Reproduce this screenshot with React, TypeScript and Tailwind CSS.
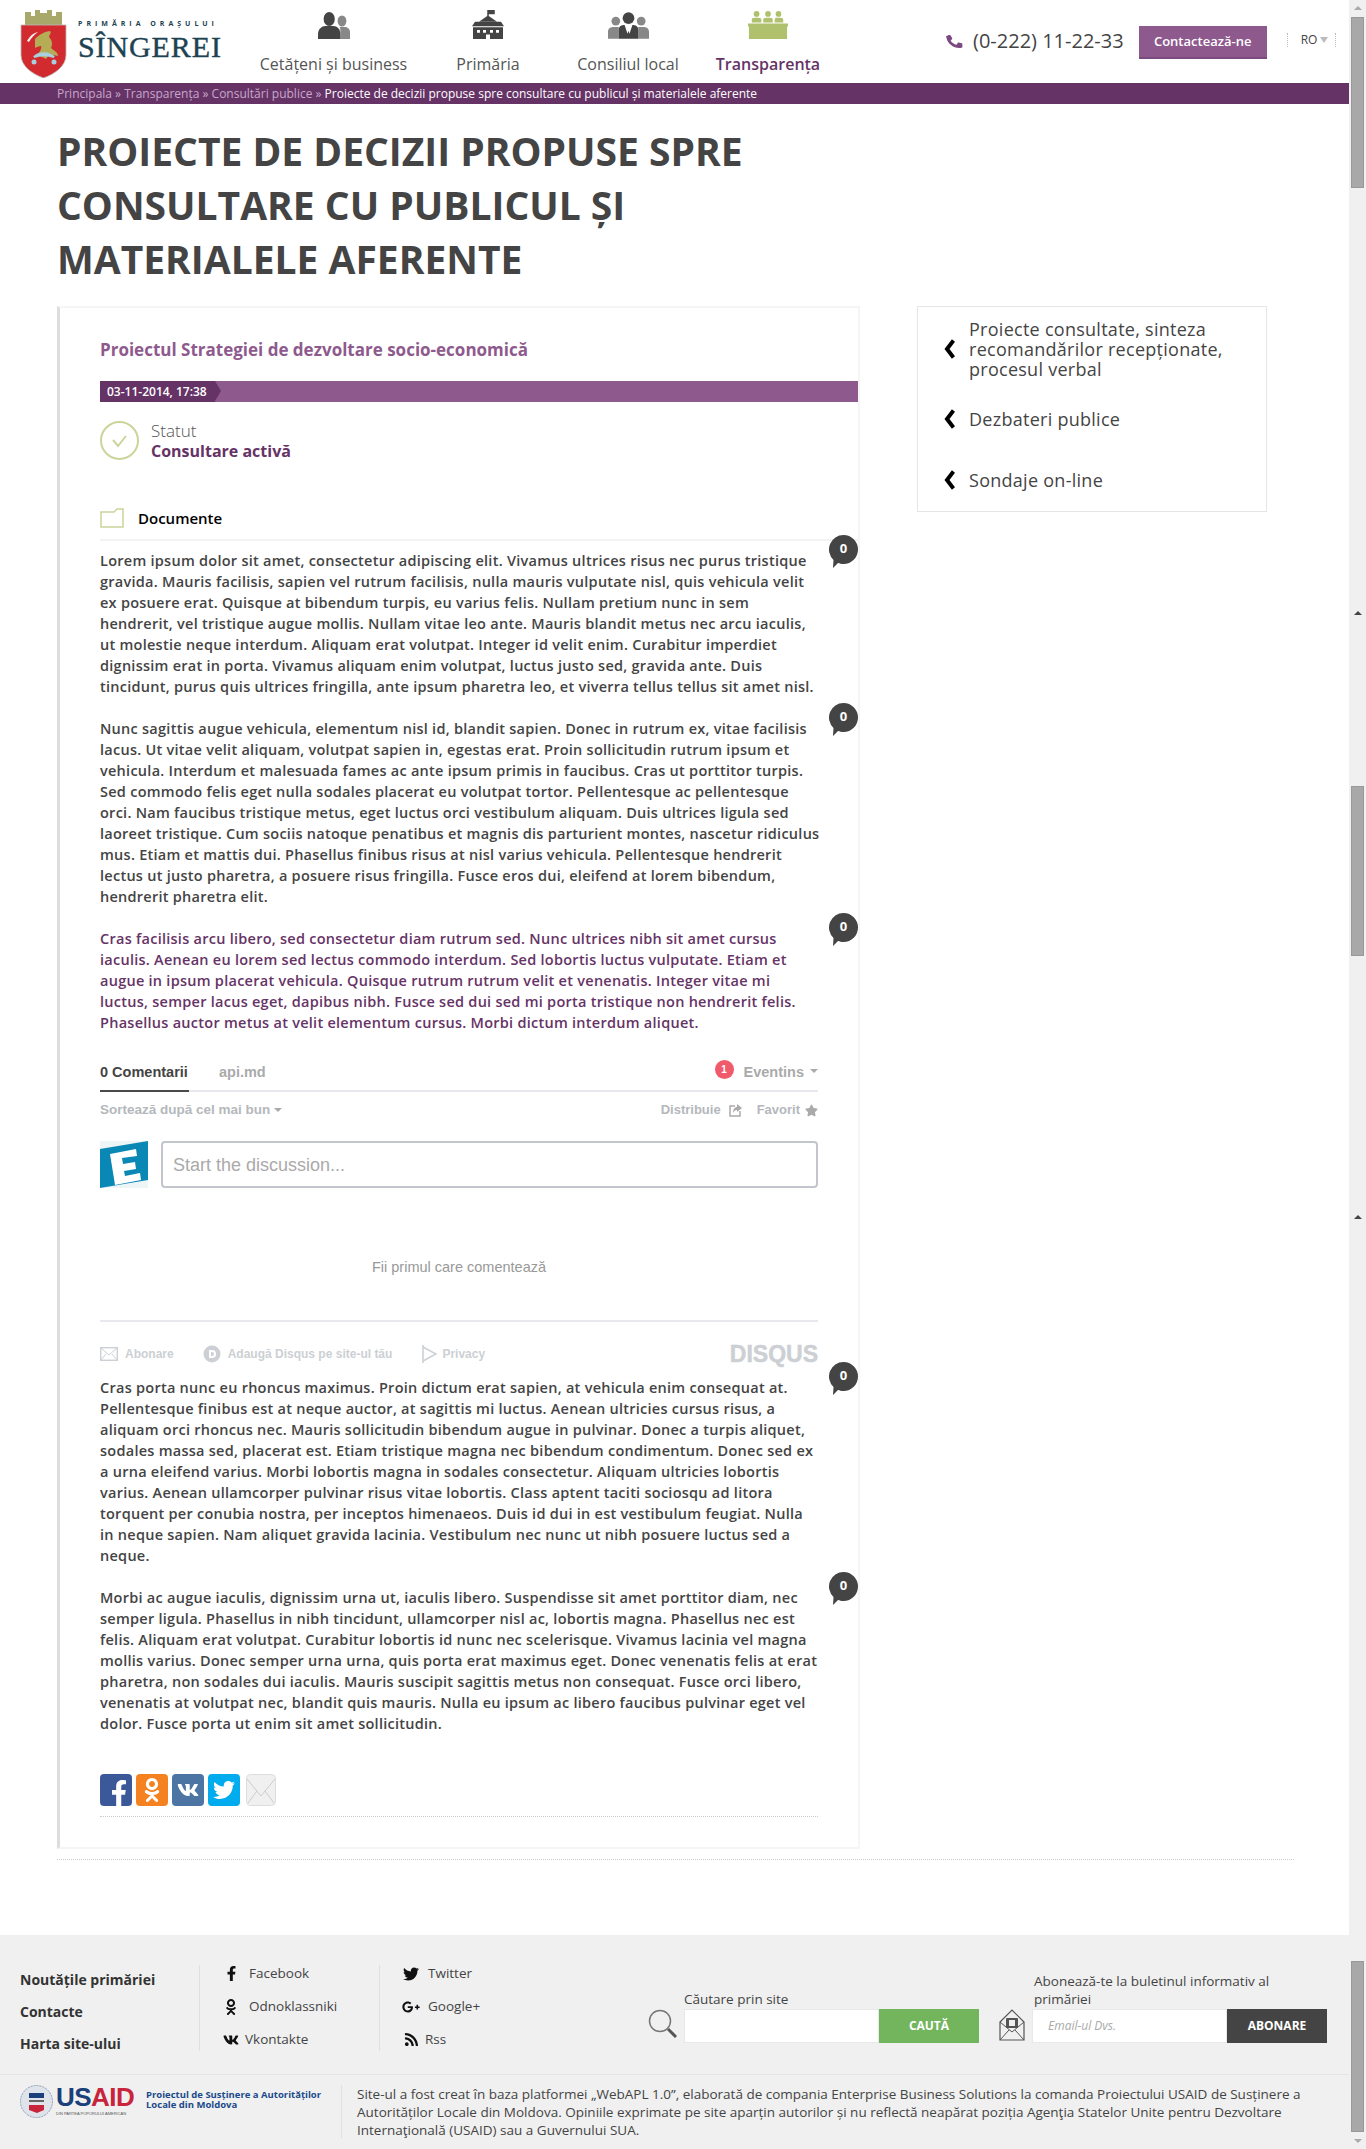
import { FaFacebookF, FaOdnoklassniki, FaVk, FaTwitter, FaGooglePlusG, FaRss, FaStar, FaPhone } from "react-icons/fa"

const paragraphs1 = [
    [
        "Lorem ipsum dolor sit amet, consectetur adipiscing elit. Vivamus ultrices risus nec purus tristique",
        "gravida. Mauris facilisis, sapien vel rutrum facilisis, nulla mauris vulputate nisl, quis vehicula velit",
        "ex posuere erat. Quisque at bibendum turpis, eu varius felis. Nullam pretium nunc in sem",
        "hendrerit, vel tristique augue mollis. Nullam vitae leo ante. Mauris blandit metus nec arcu iaculis,",
        "ut molestie neque interdum. Aliquam erat volutpat. Integer id velit enim. Curabitur imperdiet",
        "dignissim erat in porta. Vivamus aliquam enim volutpat, luctus justo sed, gravida ante. Duis",
        "tincidunt, purus quis ultrices fringilla, ante ipsum pharetra leo, et viverra tellus tellus sit amet nisl.",
    ],
    [
        "Nunc sagittis augue vehicula, elementum nisl id, blandit sapien. Donec in rutrum ex, vitae facilisis",
        "lacus. Ut vitae velit aliquam, volutpat sapien in, egestas erat. Proin sollicitudin rutrum ipsum et",
        "vehicula. Interdum et malesuada fames ac ante ipsum primis in faucibus. Cras ut porttitor turpis.",
        "Sed commodo felis eget nulla sodales placerat eu volutpat tortor. Pellentesque ac pellentesque",
        "orci. Nam faucibus tristique metus, eget luctus orci vestibulum aliquam. Duis ultrices ligula sed",
        "laoreet tristique. Cum sociis natoque penatibus et magnis dis parturient montes, nascetur ridiculus",
        "mus. Etiam et mattis dui. Phasellus finibus risus at nisl varius vehicula. Pellentesque hendrerit",
        "lectus ut justo pharetra, a posuere risus fringilla. Fusce eros dui, eleifend at lorem bibendum,",
        "hendrerit pharetra elit.",
    ],
]

const paragraph3 = [
    "Cras facilisis arcu libero, sed consectetur diam rutrum sed. Nunc ultrices nibh sit amet cursus",
    "iaculis. Aenean eu lorem sed lectus commodo interdum. Sed lobortis luctus vulputate. Etiam et",
    "augue in ipsum placerat vehicula. Quisque rutrum rutrum velit et venenatis. Integer vitae mi",
    "luctus, semper lacus eget, dapibus nibh. Fusce sed dui sed mi porta tristique non hendrerit felis.",
    "Phasellus auctor metus at velit elementum cursus. Morbi dictum interdum aliquet.",
]

const paragraphs2 = [
    [
        "Cras porta nunc eu rhoncus maximus. Proin dictum erat sapien, at vehicula enim consequat at.",
        "Pellentesque finibus est at neque auctor, at sagittis mi luctus. Aenean ultricies cursus risus, a",
        "aliquam orci rhoncus nec. Mauris sollicitudin bibendum augue in pulvinar. Donec a turpis aliquet,",
        "sodales massa sed, placerat est. Etiam tristique magna nec bibendum condimentum. Donec sed ex",
        "a urna eleifend varius. Morbi lobortis magna in sodales consectetur. Aliquam ultricies lobortis",
        "varius. Aenean ullamcorper pulvinar risus vitae lobortis. Class aptent taciti sociosqu ad litora",
        "torquent per conubia nostra, per inceptos himenaeos. Duis id dui in est vestibulum feugiat. Nulla",
        "in neque sapien. Nam aliquet gravida lacinia. Vestibulum nec nunc ut nibh posuere luctus sed a",
        "neque.",
    ],
    [
        "Morbi ac augue iaculis, dignissim urna ut, iaculis libero. Suspendisse sit amet porttitor diam, nec",
        "semper ligula. Phasellus in nibh tincidunt, ullamcorper nisl ac, lobortis magna. Phasellus nec est",
        "felis. Aliquam erat volutpat. Curabitur lobortis id nunc nec scelerisque. Vivamus lacinia vel magna",
        "mollis varius. Donec semper urna urna, quis porta erat maximus eget. Donec venenatis felis at erat",
        "pharetra, non sodales dui iaculis. Mauris suscipit sagittis metus non consequat. Fusce orci libero,",
        "venenatis at volutpat nec, blandit quis mauris. Nulla eu ipsum ac libero faucibus pulvinar eget vel",
        "dolor. Fusce porta ut enim sit amet sollicitudin.",
    ],
]

const Bubble = () => (
    <div className="absolute right-[-40px] top-[-15px] w-[29px] h-[33px]">
        <svg width="29" height="33" viewBox="0 0 29 33" className="absolute inset-0">
            <path d="M14.5 0a14.5 14.5 0 0 1 0 29c-2 0-4 -.5-5.500-1L4 33l.5-8A14.500 14.500 0 0 1 14.500 0z" fill="#444" />
        </svg>
        <span className="absolute inset-x-0 top-[5px] text-center text-[13px] leading-[16px] font-bold text-white">0</span>
    </div>
)

const Paragraph = ({ lines, purple }: { lines: string[]; purple?: boolean }) => (
    <div className="relative w-[718px]">
        <p className={`text-[14.500px] leading-[21px] font-semibold tracking-[0.018em] whitespace-nowrap ${purple ? "text-[#663366]" : "text-[#444]"}`}>
            {lines.map((line) => (
                <span key={line} className="block">{line}</span>
            ))}
        </p>
        <Bubble />
    </div>
)

const PeopleIcon = () => (
    <svg width="32" height="27" viewBox="0 0 40 27" preserveAspectRatio="none">
        <circle cx="30" cy="9" r="5.500" fill="#888" />
        <path d="M28 27v-6c0-3 0-5-1-6h6c4 0 7 2 7 5v7z" fill="#888" />
        <circle cx="14" cy="7" r="7" fill="#444" />
        <path d="M0 27v-5c0-5 5-8 9-8h10c5 0 9 3 9 8v5z" fill="#444" />
    </svg>
)

const SchoolIcon = () => (
    <svg width="32" height="29" viewBox="0 0 32 32" preserveAspectRatio="none">
        <path d="M16 0v7M16 0h6v4h-6" stroke="#444" strokeWidth="1.500" fill="#444" />
        <path d="M16 6l9 7H7z" fill="#444" />
        <path d="M3 13h26l3 5H0z" fill="#444" />
        <path fillRule="evenodd" d="M1 19h30v13H1zM5 22v3h3v-3zM11 22v3h3v-3zM18 22v3h3v-3zM24 22v3h3v-3zM14 27v5h4v-5z" fill="#444" />
    </svg>
)

const CouncilIcon = () => (
    <svg width="41" height="27" viewBox="0 0 42 27">
        <circle cx="8" cy="9" r="4.500" fill="#888" />
        <circle cx="34" cy="9" r="4.500" fill="#888" />
        <path d="M0 27v-7c0-4 3-5 6-5h5v12zM42 27v-7c0-4-3-5-6-5h-5v12z" fill="#888" />
        <circle cx="21" cy="6" r="6" fill="#444" />
        <path d="M11 27v-9c0-4 3-5 6-5l3 9 1-3 1 3 3-9c3 0 6 1 6 5v9z" fill="#444" />
    </svg>
)

const BoardIcon = () => (
    <svg width="40" height="28" viewBox="0 0 42 29" preserveAspectRatio="none">
        <circle cx="9" cy="3" r="3" fill="#afc16d" />
        <circle cx="21" cy="3" r="3" fill="#afc16d" />
        <circle cx="32" cy="3" r="3" fill="#afc16d" />
        <path d="M4 12V9q0-2 3-2h4q3 0 3 2v3zM16 12V9q0-2 3-2h4q3 0 3 2v3zM28 12V9q0-2 2-2h4q3 0 3 2v3z" fill="#afc16d" />
        <path d="M0 13h42v3h-1v13H1V16H0z" fill="#afc16d" />
    </svg>
)

const Crest = () => (
    <svg width="47" height="70" viewBox="0 0 47 70">
        <path d="M5 4h6v4h4V2h5v3h7V2h5v6h4V4h6v13l-3 4H8l-3-4z" fill="#a9a86b" />
        <path d="M1 17h45v30c0 11-11 19-22.500 23C12 66 1 58 1 47z" fill="#d22b2f" stroke="#b9b9b9" strokeWidth="0.800" />
        <path d="M15 31c4-4 8-7 15-8 2 2-1 4-1 6 3 3 4 7 2 11 3 3 7 4 7 8-3-1-6-1-8-3l-4 6c-3-2-6-2-8-5 2-3 4-5 3-8-2 0-4 1-6 2z" fill="#b5ad55" />
        <path d="M14 49c5-5 15-5 20 0-6-2-14-2-20 0z" fill="#a8d0de" stroke="#a8d0de" strokeWidth="2" />
        <circle cx="14" cy="54" r="2.500" fill="#a8d0de" />
        <circle cx="34" cy="54" r="2.500" fill="#a8d0de" />
        <path d="M7 33c3-5 6-8 11-9-4 3-7 6-9 10z" fill="#f0f0f0" />
    </svg>
)

const ShareIcon = ({ bg, children }: { bg: string; children: React.ReactNode }) => (
    <div className={`w-[32px] h-[32px] rounded-[4px] flex items-center justify-center overflow-hidden text-white ${bg}`}>{children}</div>
)

const FooterSocial = ({ icon, label, textClass }: { icon: React.ReactNode; label: string; textClass: string }) => (
    <div className="flex items-center h-[33px]">
        <span className="w-[24px] flex justify-center text-[#111]">{icon}</span>
        <span className={`text-[13.500px] text-[#444] ${textClass}`}>{label}</span>
    </div>
)

const SidebarItem = ({ children, className }: { children: React.ReactNode; className: string }) => (
    <div className={`flex items-center ${className}`}>
        <svg width="11" height="20" viewBox="0 0 11 20" className="shrink-0 ml-[26px]">
            <path d="M9.500 1.500L3 10l6.500 8.500" fill="none" stroke="#000" strokeWidth="4" />
        </svg>
        <span className="ml-[14px] text-[18px] leading-[20px] font-medium tracking-[0.015em] text-[#444]">{children}</span>
    </div>
)

export default function App() {
    return (
        <div className="relative w-[1366px] h-[2149px] overflow-hidden bg-white font-['Open_Sans',sans-serif] text-[#444]">
            <div className="w-[1349px]">
                {/* header */}
                <header className="flex h-[83px]">
                    <div className="w-[246px] pl-[20px] pt-[8px] flex">
                        <Crest />
                        <div className="ml-[11px] pt-[11px]">
                            <div className="text-[7px] leading-[9px] font-bold tracking-[0.57em] text-[#1d4352] whitespace-nowrap">PRIMĂRIA ORAȘULUI</div>
                            <div className="mt-[4px] text-[30px] leading-[30px] font-['Liberation_Serif',serif] text-[#1d4352] whitespace-nowrap tracking-[0.03em] [-webkit-text-stroke:0.4px_#1d4352]">SÎNGEREI</div>
                        </div>
                    </div>
                    <nav className="flex">
                        <div className="w-[172px] pl-[3px] flex flex-col items-center">
                            <div className="h-[29px] mt-[10px] flex items-end"><PeopleIcon /></div>
                            <div className="mt-[14px] text-[16px] leading-[22px] text-[#555]">Cetățeni și business</div>
                        </div>
                        <div className="w-[140px] flex flex-col items-center">
                            <div className="h-[29px] mt-[10px] flex items-end"><SchoolIcon /></div>
                            <div className="mt-[14px] text-[16px] leading-[22px] text-[#555]">Primăria</div>
                        </div>
                        <div className="w-[140px] flex flex-col items-center">
                            <div className="h-[29px] mt-[10px] flex items-end"><CouncilIcon /></div>
                            <div className="mt-[14px] text-[16px] leading-[22px] text-[#555]">Consiliul local</div>
                        </div>
                        <div className="w-[140px] flex flex-col items-center">
                            <div className="h-[29px] mt-[10px] flex items-end"><BoardIcon /></div>
                            <div className="mt-[14px] text-[16px] leading-[22px] font-semibold text-[#663366]">Transparența</div>
                        </div>
                    </nav>
                    <div className="flex items-start pt-[26px] ml-[109px]">
                        <FaPhone className="text-[#7a4a80] text-[15px] mt-[8px] scale-x-[-1] rotate-[-10deg]" />
                        <span className="ml-[11px] text-[20px] leading-[30px] text-[#444] whitespace-nowrap">(0-222) 11-22-33</span>
                        <button className="ml-[15px] w-[128px] h-[33px] bg-[#8e5a8e] border-b-2 border-[#7a4a80] text-white text-[13px] font-semibold">Contactează-ne</button>
                        <div className="ml-[20px] mt-[7px] h-[14px] border-l border-dotted border-[#bbb]" />
                        <span className="ml-[13px] mt-[6px] text-[12px] leading-[16px] text-[#444]">RO</span>
                        <span className="ml-[3px] mt-[11px] w-0 h-0 border-x-[4px] border-x-transparent border-t-[6px] border-t-[#bbb]" />
                        <div className="ml-[7px] mt-[7px] h-[14px] border-l border-dotted border-[#bbb]" />
                    </div>
                </header>

                {/* breadcrumb */}
                <div className="h-[21px] bg-[#663366] pl-[57px] text-[12px] leading-[21px] text-[#c7a8cb] whitespace-nowrap">
                    Principala » Transparența » Consultări publice » <span className="text-white">Proiecte de decizii propuse spre consultare cu publicul și materialele aferente</span>
                </div>

                <main className="pl-[57px]">
                    <h1 className="pt-[20px] w-[760px] text-[39px] leading-[54px] font-bold text-[#444]">PROIECTE DE DECIZII PROPUSE SPRE CONSULTARE CU PUBLICUL ȘI MATERIALELE AFERENTE</h1>

                    <div className="mt-[20px] flex items-start">
                        {/* article */}
                        <article className="w-[803px] border-l-[3px] border-l-[#ddd] border-y-2 border-r-2 border-y-[#f5f5f5] border-r-[#f5f5f5] pl-[40px] pt-[30px] pb-[30px]">
                            <h2 className="text-[17px] leading-[24px] font-bold text-[#8e5a8e]">Proiectul Strategiei de dezvoltare socio-economică</h2>

                            <div className="mt-[19px] h-[21px] bg-[#8e5a8e] flex">
                                <div className="relative w-[115px] h-[21px] bg-[#663366] pl-[7px] text-[12px] leading-[21px] font-semibold text-white">
                                    03-11-2014, 17:38
                                    <span className="absolute left-full top-0 w-0 h-0 border-y-[10.5px] border-y-transparent border-l-[6px] border-l-[#663366]" />
                                </div>
                            </div>

                            <div className="mt-[19px] h-[39px] flex">
                                <svg width="39" height="39" viewBox="0 0 39 39">
                                    <circle cx="19.500" cy="19.500" r="18.500" fill="none" stroke="#c9d59b" strokeWidth="2" />
                                    <path d="M13 19l5 6 8-10" fill="none" stroke="#c9d59b" strokeWidth="2" />
                                </svg>
                                <div className="ml-[12px]">
                                    <div className="text-[17px] leading-[20px] font-light text-[#555]">Statut</div>
                                    <div className="text-[16px] leading-[20px] font-bold text-[#663366]">Consultare activă</div>
                                </div>
                            </div>

                            <div className="mt-[48px] h-[20px] flex items-center">
                                <svg width="24" height="20" viewBox="0 0 24 20">
                                    <path d="M1 4h13l3-3h6v18H1z" fill="none" stroke="#c9d59b" strokeWidth="1.500" />
                                </svg>
                                <span className="ml-[14px] text-[15px] leading-[20px] font-semibold text-black">Documente</span>
                            </div>
                            <div className="mt-[11px] h-[2px] bg-[#f3f3f3]" />

                            <div className="mt-[9px] flex flex-col gap-[21px]">
                                {paragraphs1.map((lines) => (
                                    <Paragraph key={lines[0]} lines={lines} />
                                ))}
                                <Paragraph lines={paragraph3} purple />
                            </div>

                            {/* comments */}
                            <section className="w-[718px] mt-[26px] font-['Liberation_Sans',sans-serif]">
                                <div className="h-[33px] border-b-2 border-[#e7e9ee] flex text-[14.500px] font-bold">
                                    <div className="h-[33px] border-b-2 border-[#4a4a4a] w-[89px] pt-[3px] text-[#444] whitespace-nowrap">0 Comentarii</div>
                                    <div className="ml-[30px] pt-[3px] text-[#aaa]">api.md</div>
                                    <div className="ml-auto flex pt-[1px]">
                                        <span className="w-[19px] h-[19px] rounded-full bg-[#f05a6a] text-white text-[10px] leading-[19px] text-center">1</span>
                                        <span className="ml-[10px] mt-[2px] text-[#aaa]">Eventins</span>
                                        <span className="ml-[6px] mt-[9px] w-0 h-0 border-x-[4px] border-x-transparent border-t-[4px] border-t-[#aaa]" />
                                    </div>
                                </div>
                                <div className="mt-[8px] h-[20px] flex items-center text-[13px] font-bold text-[#b4b8bc]">
                                    <span className="text-[13.500px]">Sortează după cel mai bun</span>
                                    <span className="ml-[4px] w-0 h-0 border-x-[4px] border-x-transparent border-t-[4px] border-t-[#aaa]" />
                                    <span className="ml-auto">Distribuie</span>
                                    <svg width="13" height="13" viewBox="0 0 13 13" className="ml-[8px]">
                                        <path d="M6 2H1v10h10V7" fill="none" stroke="#aaa" strokeWidth="1.500" />
                                        <path d="M8 0l5 4-5 4V6C6 6 5 7 4 9c0-4 2-6 4-6z" fill="#aaa" />
                                    </svg>
                                    <span className="ml-[15px]">Favorit</span>
                                    <FaStar className="ml-[5px] text-[#aaa] text-[13px]" />
                                </div>
                                <div className="mt-[21px] flex gap-[13px]">
                                    <svg width="48" height="47" viewBox="0 0 48 47" className="shrink-0">
                                        <rect width="48" height="47" fill="#eef5f7" />
                                        <path d="M0 8l48-8v39L0 47z" fill="#0a88b5" />
                                        <path d="M10 13l26-5 1 7-15 2 1 6 12-2 1 7-12 2 1 5 15-3 1 7-26 5z" fill="#fff" />
                                    </svg>
                                    <div className="flex-1 h-[47px] border-2 border-[#c2c6cc] rounded-[4px] pl-[10px] text-[18px] leading-[45px] text-[#aaa]">Start the discussion...</div>
                                </div>
                                <div className="mt-[69px] h-[20px] text-center text-[14.500px] leading-[20px] text-[#999]">Fii primul care comentează</div>
                                <div className="mt-[43px] h-[2px] bg-[#e7e9ee]" />
                                <div className="mt-[22px] h-[20px] flex items-center text-[12px] font-bold text-[#ccd0d4]">
                                    <svg width="18" height="14" viewBox="0 0 18 14">
                                        <rect x="0.700" y="0.700" width="16.600" height="12.600" fill="none" stroke="#ccd0d4" strokeWidth="1.400" />
                                        <path d="M1 1l8 7 8-7M1 13l5-6M17 13l-5-6" fill="none" stroke="#ccd0d4" />
                                    </svg>
                                    <span className="ml-[7px]">Abonare</span>
                                    <svg width="18" height="18" viewBox="0 0 18 18" className="ml-[29px]">
                                        <circle cx="9" cy="9" r="8.500" fill="#ccd0d4" />
                                        <path d="M6 5h3a4 4 0 0 1 0 8H6z" fill="#fff" />
                                        <path d="M8 7h1a2 2 0 0 1 0 4H8z" fill="#ccd0d4" />
                                    </svg>
                                    <span className="ml-[7px]">Adaugă Disqus pe site-ul tău</span>
                                    <svg width="15" height="18" viewBox="0 0 15 18" className="ml-[30px]">
                                        <path d="M1 0v18M1 2l13 7-13 7" fill="none" stroke="#ccd0d4" strokeWidth="1.500" />
                                    </svg>
                                    <span className="ml-[5px]">Privacy</span>
                                    <span className="ml-auto text-[23px] leading-[20px] font-extrabold text-[#ccd0d4] [-webkit-text-stroke:0.5px_#ccd0d4]">DISQUS</span>
                                </div>
                            </section>

                            <div className="mt-[13px] flex flex-col gap-[21px]">
                                {paragraphs2.map((lines) => (
                                    <Paragraph key={lines[0]} lines={lines} />
                                ))}
                            </div>

                            <div className="mt-[40px] flex gap-[4px] h-[32px]">
                                <ShareIcon bg="bg-[#3b5998]"><FaFacebookF className="text-[26px] mt-[6px] ml-[6px]" /></ShareIcon>
                                <ShareIcon bg="bg-[#f58220]"><FaOdnoklassniki className="text-[24px]" /></ShareIcon>
                                <ShareIcon bg="bg-[#4c75a3]"><FaVk className="text-[22px]" /></ShareIcon>
                                <ShareIcon bg="bg-[#00aced]"><FaTwitter className="text-[22px]" /></ShareIcon>
                                <svg width="30" height="32" viewBox="0 0 30 32" className="ml-[2px]">
                                    <rect x="0.500" y="0.500" width="29" height="31" rx="4" fill="#f0f0f0" stroke="#ddd" />
                                    <path d="M1 5l14 17L29 5M2 29l9-12M28 29l-9-12" fill="none" stroke="#ccc" />
                                </svg>
                            </div>
                            <div className="mt-[10px] w-[718px] border-t border-dotted border-[#ccc]" />
                        </article>

                        {/* sidebar */}
                        <aside className="ml-[57px] w-[350px] h-[206px] border border-[#e5e5e5] pt-[12px]">
                            <SidebarItem className="h-[60px]">Proiecte consultate, sinteza<br />recomandărilor recepționate,<br />procesul verbal</SidebarItem>
                            <SidebarItem className="mt-[30px] h-[20px]">Dezbateri publice</SidebarItem>
                            <SidebarItem className="mt-[41px] h-[20px]">Sondaje on-line</SidebarItem>
                        </aside>
                    </div>

                    <div className="mt-[10px] w-[1237px] border-t border-dotted border-[#ccc]" />
                </main>

                {/* footer */}
                <footer className="mt-[75px] h-[215px] bg-[#f0f0f0]">
                    <div className="h-[140px] flex border-b border-[#e4e4e4] pt-[30px]">
                        <div className="w-[200px] h-[86px] pl-[20px] border-r border-[#e0e0e0] flex flex-col gap-[13px] pt-[5px] text-[14px] leading-[19px] font-bold text-[#333]">
                            <div>Noutățile primăriei</div>
                            <div>Contacte</div>
                            <div>Harta site-ului</div>
                        </div>
                        <div className="w-[180px] h-[86px] border-r border-[#e0e0e0] pl-[19px]">
                            <div className="-mt-[8px]">
                                <FooterSocial icon={<FaFacebookF className="text-[15px]" />} label="Facebook" textClass="ml-[6px]" />
                                <FooterSocial icon={<FaOdnoklassniki className="text-[16px]" />} label="Odnoklassniki" textClass="ml-[6px]" />
                                <FooterSocial icon={<FaVk className="text-[16px]" />} label="Vkontakte" textClass="ml-[2px]" />
                            </div>
                        </div>
                        <div className="w-[268px] h-[86px] pl-[19px]">
                            <div className="-mt-[8px]">
                                <FooterSocial icon={<FaTwitter className="text-[16px]" />} label="Twitter" textClass="ml-[5px]" />
                                <FooterSocial icon={<FaGooglePlusG className="text-[18px]" />} label="Google+" textClass="ml-[5px]" />
                                <FooterSocial icon={<FaRss className="text-[15px]" />} label="Rss" textClass="ml-[2px]" />
                            </div>
                        </div>
                        <div className="flex items-end h-[78px]">
                            <svg width="30" height="29" viewBox="0 0 30 29" className="mb-[5px]">
                                <circle cx="12" cy="12" r="10.500" fill="none" stroke="#777" strokeWidth="1.500" />
                                <path d="M20 20l8 8" stroke="#555" strokeWidth="3" />
                            </svg>
                            <div className="ml-[6px] w-[295px]">
                                <div className="text-[13.500px] leading-[18px] text-[#444] -mt-[1px] mb-[1px]">Căutare prin site</div>
                                <div className="flex h-[34px]">
                                    <div className="w-[195px] bg-white border border-[#e8e8e8]" />
                                    <div className="w-[100px] bg-[#72b55c] text-center text-[12px] leading-[34px] font-bold text-white">CAUTĂ</div>
                                </div>
                            </div>
                            <svg width="26" height="32" viewBox="0 0 26 32" className="ml-[20px] mb-[2px]">
                                <path d="M1 13L13 1l12 12v18H1z" fill="none" stroke="#555" strokeWidth="1.200" />
                                <path d="M1 13l12 10 12-10M1 31l9-10M25 31l-9-10" fill="none" stroke="#555" />
                                <rect x="7" y="9" width="12" height="10" rx="1" fill="#555" />
                                <rect x="10" y="11" width="6" height="6" fill="#f0f0f0" />
                            </svg>
                            <div className="ml-[7px] w-[295px]">
                                <div className="text-[13.500px] leading-[18px] text-[#444] pl-[2px] w-[280px] mb-[1px]">Abonează-te la buletinul informativ al primăriei</div>
                                <div className="flex h-[34px]">
                                    <div className="w-[195px] bg-white border border-[#e8e8e8] pl-[15px] text-[12px] leading-[32px] italic text-[#aaa]">Email-ul Dvs.</div>
                                    <div className="w-[100px] bg-[#444] text-center text-[12px] leading-[34px] font-bold text-white">ABONARE</div>
                                </div>
                            </div>
                        </div>
                    </div>
                    <div className="flex pt-[10px]">
                        <div className="w-[342px] h-[53px] pl-[20px] border-r border-[#e0e0e0] flex items-start">
                            <svg width="33" height="33" viewBox="0 0 33 33">
                                <circle cx="16.500" cy="16.500" r="16" fill="#dfe3ea" stroke="#8b9bb8" strokeDasharray="2 1" />
                                <rect x="9" y="8" width="15" height="5" fill="#1a3f7a" />
                                <path d="M9 16h15" stroke="#666" strokeWidth="2" />
                                <path d="M9 20h15v5l-7 3-8-3z" fill="#c8243c" />
                            </svg>
                            <div className="ml-[3px] w-[76px] -mt-[2px] font-['Liberation_Sans',sans-serif]">
                                <div className="text-[26px] leading-[28px] font-bold tracking-[-0.02em] whitespace-nowrap"><span className="text-[#1a3f7a]">US</span><span className="text-[#c8243c]">AID</span></div>
                                <div className="text-[4px] leading-[5px] text-[#555] whitespace-nowrap">DIN PARTEA POPORULUI AMERICAN</div>
                            </div>
                            <div className="ml-[14px] mt-[5px] text-[9.500px] leading-[10px] font-bold text-[#1a4a8a] whitespace-nowrap">Proiectul de Susținere a Autorităților<br />Locale din Moldova</div>
                        </div>
                        <p className="ml-[15px] w-[970px] text-[13.500px] leading-[18px] text-[#444]">Site-ul a fost creat în baza platformei „WebAPL 1.0”, elaborată de compania Enterprise Business Solutions la comanda Proiectului USAID de Susținere a Autorităților Locale din Moldova. Opiniile exprimate pe site aparțin autorilor și nu reflectă neapărat poziția Agenţia Statelor Unite pentru Dezvoltare Internaţională (USAID) sau a Guvernului SUA.</p>
                    </div>
                </footer>
            </div>

            {/* stitched page scrollbars */}
            <div className="absolute right-0 top-0 bottom-0 w-[17px] bg-[#f0f0f0]">
                <span className="absolute left-[5px] top-[6px] w-0 h-0 border-x-[4px] border-x-transparent border-b-[4px] border-b-[#aaa]" />
                <div className="absolute left-[2px] w-[13px] top-[17px] h-[171px] bg-[#a8a8a8] border border-[#999]" />
                <span className="absolute left-[5px] top-[611px] w-0 h-0 border-x-[4px] border-x-transparent border-b-[4px] border-b-[#444]" />
                <div className="absolute left-[2px] w-[13px] top-[786px] h-[170px] bg-[#a8a8a8] border border-[#999]" />
                <span className="absolute left-[5px] top-[1215px] w-0 h-0 border-x-[4px] border-x-transparent border-b-[4px] border-b-[#444]" />
                <div className="absolute left-[2px] w-[13px] top-[1961px] h-[171px] bg-[#a8a8a8] border border-[#999]" />
                <span className="absolute left-[5px] top-[2139px] w-0 h-0 border-x-[4px] border-x-transparent border-t-[4px] border-t-[#aaa]" />
            </div>
        </div>
    )
}
